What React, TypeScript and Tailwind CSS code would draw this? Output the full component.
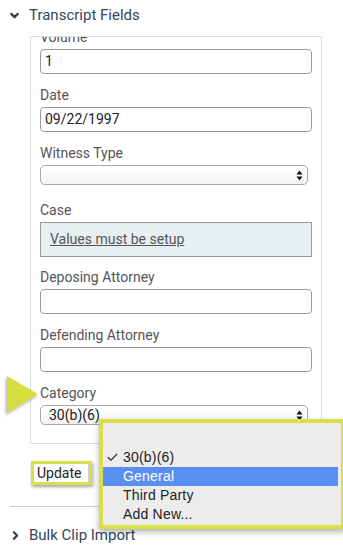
import { ChevronDown, ChevronRight, Check } from 'lucide-react';

const font = { fontFamily: 'Roboto, "Liberation Sans", sans-serif' };

function Label({ children, className = '' }: { children: React.ReactNode; className?: string }) {
  return (
    <div className={`h-[18px] text-[14px] leading-[18px] text-[#555] ${className}`}>{children}</div>
  );
}

function TextInput({ value = '' }: { value?: string }) {
  return (
    <div className="mt-[3px] flex h-[25px] w-[272px] items-center rounded-[4px] border border-[#9a9a9a] bg-white px-[4px] text-[14px] text-[#222]">
      {value}
    </div>
  );
}

function Stepper() {
  return (
    <svg width="7" height="11" viewBox="0 0 7 11" className="shrink-0">
      <path d="M3.5 0.5 L6.5 4.5 H0.5 Z" fill="#111" />
      <path d="M3.5 10.5 L6.5 6.5 H0.5 Z" fill="#111" />
    </svg>
  );
}

function SelectBox({ value = '' }: { value?: string }) {
  return (
    <div className="mt-[3px] flex h-[20px] w-[268px] items-center justify-between rounded-[5px] border border-[#a8a8a8] bg-gradient-to-b from-white to-[#f3f3f3] pl-[8px] pr-[4px] text-[14px] leading-none text-[#222]">
      <span>{value}</span>
      <Stepper />
    </div>
  );
}

export default function App() {
  return (
    <div className="relative h-[552px] w-[343px] overflow-hidden bg-white" style={font}>
      <div className="flex h-[30px] items-center pl-[8px]">
        <ChevronDown className="h-[13px] w-[13px] text-[#2f3d4c]" strokeWidth={4} />
        <span className="ml-[8px] text-[15px] text-[#34465a]">Transcript Fields</span>
      </div>

      <div className="ml-[30px] mt-[6px] w-[292px] overflow-hidden border border-[#d2dfe7] px-[9px] pb-[18px]">
        <Label className="-mt-[9px]">Volume</Label>
        <TextInput value="1" />

        <Label className="mt-[12px]">Date</Label>
        <TextInput value="09/22/1997" />

        <Label className="mt-[12px]">Witness Type</Label>
        <SelectBox />

        <Label className="mt-[16px]">Case</Label>
        <div className="mt-[3px] flex h-[35px] w-[272px] items-center border border-[#999] bg-[#e8eff2] pl-[9px] text-[14px] text-[#555] underline">
          Values must be setup
        </div>

        <Label className="mt-[11px]">Deposing Attorney</Label>
        <TextInput />

        <Label className="mt-[12px]">Defending Attorney</Label>
        <TextInput />

        <Label className="mt-[12px]">Category</Label>
        <SelectBox value="30(b)(6)" />
      </div>

      <div className="ml-[31px] mt-[17px] h-[24px] w-[61px] border-[3px] border-[#d9df48] shadow-[1px_2px_3px_rgba(0,0,0,0.35)]">
        <div className="flex h-full w-full items-center border-r border-[#cfcfcf] bg-white pl-[3px] text-[14px] leading-none text-[#222]">
          Update
        </div>
      </div>

      <div className="ml-[10px] mt-[21px] h-px bg-[#cccccc]" />

      <div className="mt-[18px] flex h-[20px] items-center pl-[9px]">
        <ChevronRight className="h-[13px] w-[13px] text-[#2f3d4c]" strokeWidth={4} />
        <span className="ml-[7px] text-[15px] text-[#34465a]">Bulk Clip Import</span>
      </div>

      <svg className="absolute left-0 top-[372px]" width="46" height="48" viewBox="0 0 46 48">
        <defs>
          <filter id="sh" x="-30%" y="-30%" width="160%" height="160%">
            <feDropShadow dx="-1" dy="2" stdDeviation="1.5" floodColor="#000" floodOpacity="0.35" />
          </filter>
        </defs>
        <path d="M7 4 L38 22 L7 41 Z" fill="#d6dd3f" filter="url(#sh)" />
      </svg>

      <div
        className="absolute left-[99px] top-[419px] h-[110px] w-[246px] border-[4px] border-[#d9df48] bg-[#ececec] shadow-[0_3px_6px_rgba(0,0,0,0.3)]"
        style={{ fontFamily: '"Liberation Sans", Arial, sans-serif' }}
      >
        <div className="pt-[25px] text-[14px] tracking-[0.2px] text-[#1e1e1e]">
          <div className="relative flex h-[19px] items-center pl-[20px]">
            <Check className="absolute left-[3px] h-[13px] w-[13px] text-[#333]" strokeWidth={2.2} />
            30(b)(6)
          </div>
          <div className="mr-[3px] flex h-[19px] items-center bg-[#5a8ef0] pl-[20px] text-white">General</div>
          <div className="flex h-[19px] items-center pl-[20px]">Third Party</div>
          <div className="flex h-[19px] items-center pl-[20px]">Add New...</div>
        </div>
      </div>
    </div>
  );
}
